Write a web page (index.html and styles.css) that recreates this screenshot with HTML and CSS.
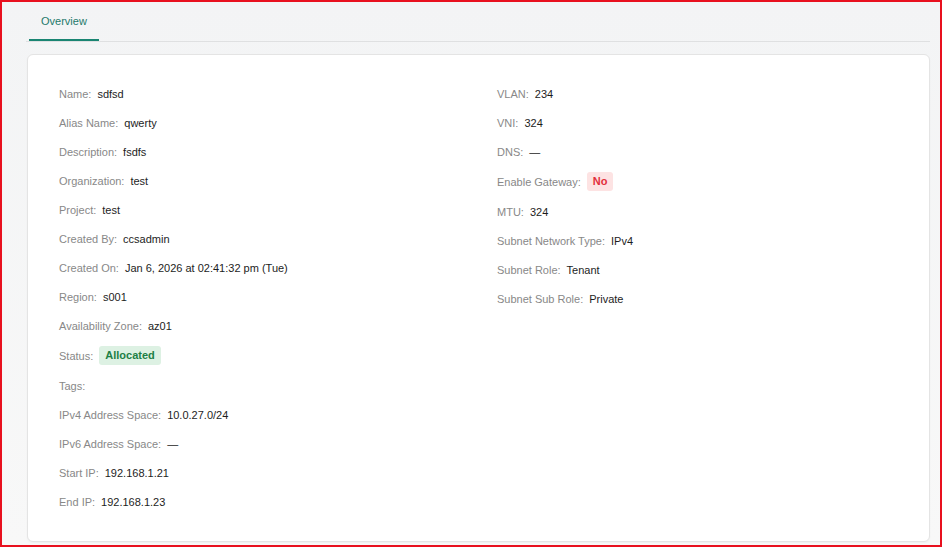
FILE: index.html
```html
<!DOCTYPE html>
<html lang="en">
<head>
    <meta charset="UTF-8">
    <meta name="viewport" content="width=device-width, initial-scale=1.0">
    <title>Subnet Overview</title>
    <link rel="stylesheet" href="styles.css">
</head>
<body>

<div class="frame">
    <div class="tab-bar">
        <div class="tab active">Overview</div>
    </div>

    <div class="card">
        <div class="details">
            <div class="column">
                <div class="row"><span class="label">Name:</span><span class="value">sdfsd</span></div>
                <div class="row"><span class="label">Alias Name:</span><span class="value">qwerty</span></div>
                <div class="row"><span class="label">Description:</span><span class="value">fsdfs</span></div>
                <div class="row"><span class="label">Organization:</span><span class="value">test</span></div>
                <div class="row"><span class="label">Project:</span><span class="value">test</span></div>
                <div class="row"><span class="label">Created By:</span><span class="value">ccsadmin</span></div>
                <div class="row"><span class="label">Created On:</span><span class="value">Jan 6, 2026 at 02:41:32 pm (Tue)</span></div>
                <div class="row"><span class="label">Region:</span><span class="value">s001</span></div>
                <div class="row"><span class="label">Availability Zone:</span><span class="value">az01</span></div>
                <div class="row"><span class="label">Status:</span><span class="badge badge-green">Allocated</span></div>
                <div class="row"><span class="label">Tags:</span></div>
                <div class="row"><span class="label">IPv4 Address Space:</span><span class="value">10.0.27.0/24</span></div>
                <div class="row"><span class="label">IPv6 Address Space:</span><span class="value">&mdash;</span></div>
                <div class="row"><span class="label">Start IP:</span><span class="value">192.168.1.21</span></div>
                <div class="row"><span class="label">End IP:</span><span class="value">192.168.1.23</span></div>
            </div>
            <div class="column">
                <div class="row"><span class="label">VLAN:</span><span class="value">234</span></div>
                <div class="row"><span class="label">VNI:</span><span class="value">324</span></div>
                <div class="row"><span class="label">DNS:</span><span class="value">&mdash;</span></div>
                <div class="row"><span class="label">Enable Gateway:</span><span class="badge badge-red">No</span></div>
                <div class="row"><span class="label">MTU:</span><span class="value">324</span></div>
                <div class="row"><span class="label">Subnet Network Type:</span><span class="value">IPv4</span></div>
                <div class="row"><span class="label">Subnet Role:</span><span class="value">Tenant</span></div>
                <div class="row"><span class="label">Subnet Sub Role:</span><span class="value">Private</span></div>
            </div>
        </div>
    </div>
</div>

</body>
</html>
```

FILE: styles.css
```css
body {
    margin: 0;
    font-family: "Liberation Sans", Arial, sans-serif;
    font-size: 11px;
    background: #ffffff;
}
.frame {
    box-sizing: border-box;
    width: 942px;
    height: 547px;
    border: 2px solid #e8101e;
    background: linear-gradient(#f3f4f5, #f8f8f8);
    padding: 0 10px 0 24px;
}
.tab-bar {
    height: 39px;
    border-bottom: 1px solid #dfe0e1;
    display: flex;
    padding-left: 3px;
}
.tab {
    box-sizing: border-box;
    height: 39px;
    padding: 0 12px;
    line-height: 39px;
    color: #1f7a6b;
}
.tab.active {
    border-bottom: 2px solid #1a8572;
}
.card {
    box-sizing: border-box;
    margin: 12px 0 0 1px;
    height: 488px;
    background: #ffffff;
    border: 1px solid #e4e4e4;
    border-radius: 6px;
    box-shadow: 0 1px 2px rgba(0, 0, 0, 0.04);
    padding: 30px 32px 20px 31px;
}
.details {
    display: grid;
    grid-template-columns: 1fr 1fr;
    column-gap: 38px;
}
.row {
    display: flex;
    align-items: center;
    min-height: 17px;
    margin-bottom: 12px;
}
.label {
    color: #888888;
    margin-right: 6px;
}
.value {
    color: #1d1d1d;
}
.badge {
    display: inline-block;
    height: 19px;
    line-height: 19px;
    padding: 0 6px;
    border-radius: 3px;
    font-weight: bold;
}
.badge-green {
    background: #ddf1e3;
    color: #1d7f45;
}
.badge-red {
    background: #fde3e3;
    color: #e2303c;
}
```
